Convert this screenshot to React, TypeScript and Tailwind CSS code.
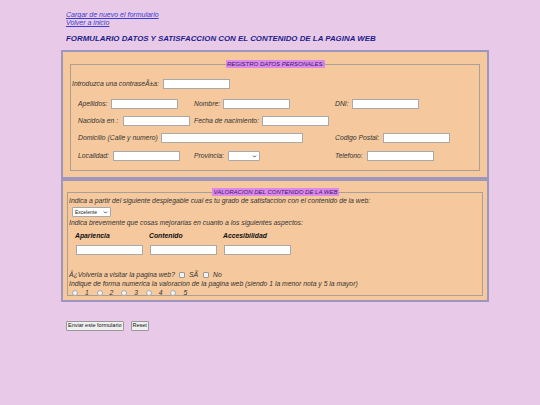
import { ChevronDown } from "lucide-react";

const font = "font-['Liberation_Sans',Arial,sans-serif]";
const label = "text-[6.8px] italic text-[#333] leading-[10px] whitespace-nowrap";
const field = "h-[10px] w-[67px] border border-[#a9a9a9] bg-white";

function Select({ text, width }: { text: string; width: string }) {
  return (
    <div
      className={`${width} h-[10px] border border-[#a9a9a9] bg-white rounded-[1px] flex items-center justify-between pl-[2px] pr-[2px]`}
    >
      <span className="text-[5px] text-[#222] not-italic leading-none">{text}</span>
      <ChevronDown className="w-[5px] h-[5px] text-[#333]" strokeWidth={4} />
    </div>
  );
}

function Check() {
  return <span className="inline-block w-[6px] h-[6px] border border-[#999] bg-[#f3f3f3] rounded-[1px]" />;
}

function Radio() {
  return <span className="inline-block w-[6px] h-[6px] border border-[#aaa] bg-[#f3f3f3] rounded-full" />;
}

export default function App() {
  const firstRow = [
    { label: "Apellidos:", gap: "w-[4px]" },
    { label: "Nombre:", gap: "w-[3px]" },
    { label: "DNI:", gap: "w-[3px]" },
  ];

  return (
    <div className={`${font} min-h-[405px] bg-[#e8cae8] pl-[61px] pt-[11px]`}>
      {/* Links */}
      <div className="pl-[5px] flex flex-col text-[7px] italic leading-[8px]">
        <a href="#" className="text-[#3b3bd0] underline w-fit">Cargar de nuevo el formulario</a>
        <a href="#" className="text-[#3b3bd0] underline w-fit">Volver a inicio</a>
      </div>

      <h1 className="pl-[5px] mt-[7px] text-[7.9px] font-bold italic text-[#1c1c8c] leading-[10px]">
        FORMULARIO DATOS Y SATISFACCION CON EL CONTENIDO DE LA PAGINA WEB
      </h1>

      {/* Registro datos personales */}
      <div className="mt-[6px] w-[428px] h-[129px] border-2 border-[#9d97bf] bg-[#f5c89d] pt-[8px] px-[7px]">
        <fieldset className="border border-[#aa9f95] h-[111px] pl-[1px]">
          <legend className="mx-auto bg-[#de88ea] px-[1px] text-[6px] italic text-[#33206a] leading-[8px]">
            REGISTRO DATOS PERSONALES:
          </legend>

          <div className="mt-[11px] flex items-center gap-[4px]">
            <span className={label}>Introduzca una contraseÃ±a:</span>
            <div className={field} />
          </div>

          <div className="pl-[6px] mt-[10px] flex flex-col gap-[7px]">
            <div className="grid grid-cols-[116px_141px_1fr] items-center">
              {firstRow.map((c) => (
                <div key={c.label} className="flex items-center">
                  <span className={label}>{c.label}</span>
                  <span className={c.gap} />
                  <div className={field} />
                </div>
              ))}
            </div>

            <div className="grid grid-cols-[116px_141px_1fr] items-center">
              <div className="flex items-center gap-[5px]">
                <span className={label}>Nacido/a en :</span>
                <div className={field} />
              </div>
              <div className="flex items-center gap-[3px]">
                <span className={label}>Fecha de nacimiento:</span>
                <div className={field} />
              </div>
            </div>

            <div className="grid grid-cols-[257px_1fr] items-center">
              <div className="flex items-center gap-[3px]">
                <span className={label}>Domicilio (Calle y numero)</span>
                <div className="h-[10px] w-[142px] border border-[#a9a9a9] bg-white" />
              </div>
              <div className="flex items-center gap-[4px]">
                <span className={label}>Codigo Postal:</span>
                <div className={field} />
              </div>
            </div>

            <div className="grid grid-cols-[116px_141px_1fr] items-center mt-[1px]">
              <div className="flex items-center gap-[4px]">
                <span className={label}>Localidad:</span>
                <div className={field} />
              </div>
              <div className="flex items-center gap-[4px]">
                <span className={label}>Provincia:</span>
                <Select text="" width="w-[32px]" />
              </div>
              <div className="flex items-center gap-[4px]">
                <span className={label}>Telefono:</span>
                <div className={field} />
              </div>
            </div>
          </div>
        </fieldset>
      </div>

      {/* Valoracion del contenido */}
      <div className="w-[428px] h-[123px] border-2 border-[#9d97bf] bg-[#f5c89d] pt-[7px] px-[4px]">
        <fieldset className="border border-[#aa9f95] h-[108px] pl-[1px]">
          <legend className="mx-auto bg-[#de88ea] px-[1px] text-[6px] italic text-[#33206a] leading-[8px]">
            VALORACION DEL CONTENIDO DE LA WEB
          </legend>

          <p className={label}>
            Indica a partir del siguiente desplegable cual es tu grado de satisfaccion con el contenido de la web:
          </p>
          <div className="pl-[3px] mt-[1px]">
            <Select text="Excelente" width="w-[39px]" />
          </div>
          <p className={`${label} mt-[1px]`}>
            Indica brevemente que cosas mejorarias en cuanto a los siguientes aspectos:
          </p>

          <div className="pl-[6px] mt-[3px] grid grid-cols-[74px_74px_74px] w-fit">
            {["Apariencia", "Contenido", "Accesibilidad"].map((h) => (
              <span key={h} className="text-[6.8px] font-bold italic text-[#111] leading-[10px]">
                {h}
              </span>
            ))}
            {[0, 1, 2].map((n) => (
              <div key={n} className="pl-[1px] pt-[4px]">
                <div className={field} />
              </div>
            ))}
          </div>

          <div className="mt-[15px] flex items-center">
            <span className={label}>Â¿Volveria a visitar la pagina web?</span>
            <span className="w-[4px]" />
            <Check />
            <span className={`${label} ml-[4px] mr-[5px]`}>SÃ</span>
            <Check />
            <span className={`${label} ml-[4px]`}>No</span>
          </div>
          <p className={`${label} -mt-[1px]`}>
            Indique de forma numerica la valoracion de la pagina web (siendo 1 la menor nota y 5 la mayor)
          </p>
          <div className="pl-[3px] flex items-center -mt-[1px]">
            {[1, 2, 3, 4, 5].map((n) => (
              <div key={n} className="flex items-center w-[24.6px]">
                <Radio />
                <span className={`${label} ml-[7px]`}>{n}</span>
              </div>
            ))}
          </div>
        </fieldset>
      </div>

      {/* Buttons */}
      <div className="pl-[5px] mt-[19px] flex items-center gap-[7px]">
        <button className="h-[10px] px-[1px] border border-[#999] bg-[#f0f0f0] text-[5.5px] text-[#111] leading-none rounded-[1px]">
          Enviar este formulario
        </button>
        <button className="h-[10px] px-[1px] border border-[#999] bg-[#f0f0f0] text-[5.5px] text-[#111] leading-none rounded-[1px]">
          Reset
        </button>
      </div>
    </div>
  );
}
